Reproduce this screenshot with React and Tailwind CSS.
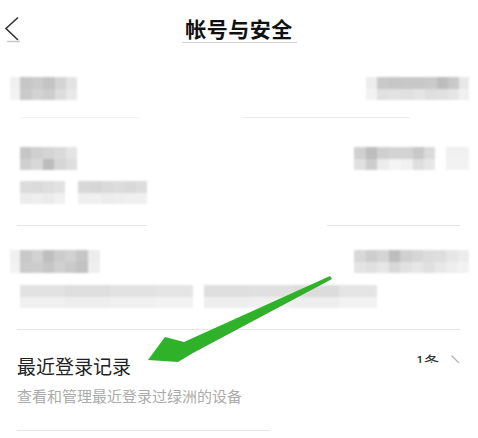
import React from "react";

const Mosaic = ({ rows, className = "" }) => (
  <div className={"flex flex-col blur-[1.2px] " + className}>
    {rows.map((r, i) => (
      <div key={i} className="flex h-[11.5px]">
        {r.map(([w, c], j) => (
          <div key={j} style={{ width: w, background: c }} />
        ))}
      </div>
    ))}
  </div>
);

export default function App() {
  return (
    <div
      className="relative w-[478px] h-[438px] overflow-hidden bg-white"
      style={{ fontFamily: '"Noto Sans CJK SC", "Noto Sans", sans-serif' }}
    >
      {/* header */}
      <div className="h-[60px] grid grid-cols-[1fr_auto_1fr] items-start">
        <div className="pt-[16px] pl-[4px]">
          <svg width="20" height="28" viewBox="0 0 20 28">
            <polyline points="14,1.5 2,12.5 14,24" fill="none" stroke="#333" strokeWidth="1.6" strokeLinejoin="miter" />
            <line x1="3" y1="25.5" x2="16" y2="25.5" stroke="#c8c8c8" strokeWidth="1.5" />
          </svg>
        </div>
        <div className="pt-[13px] flex flex-col items-center">
          <div className="text-[21px] leading-[30px] font-bold text-[#111] tracking-[0.5px]">帐号与安全</div>
          <div className="w-[115px] h-px bg-[#d4d4d4] mt-[-1px]" />
        </div>
        <div />
      </div>

      {/* row 1 */}
      <div className="mt-[17px] flex justify-between pl-[10px] pr-[9px]">
        <Mosaic
          rows={[
            [[10, "#f0f0f0"], [12, "#c6c6c6"], [11, "#cbcbcb"], [12, "#c3c3c3"], [11, "#d4d4d4"], [11, "#e3e3e3"]],
            [[10, "#f2f2f2"], [12, "#cacaca"], [11, "#d3d3d3"], [12, "#cdcdcd"], [11, "#dcdcdc"], [11, "#e8e8e8"]],
          ]}
        />
        <Mosaic
          rows={[
            [[11, "#ededed"], [12, "#c9c9c9"], [12, "#c6c6c6"], [12, "#c8c8c8"], [12, "#c8c8c8"], [12, "#cacaca"], [11, "#bdbdbd"], [11, "#c9c9c9"], [10, "#e8e8e8"]],
            [[11, "#f2f2f2"], [12, "#e0e0e0"], [12, "#e2e2e2"], [12, "#e0e0e0"], [12, "#e4e4e4"], [12, "#dedede"], [11, "#e0e0e0"], [11, "#e6e6e6"], [10, "#f0f0f0"]],
          ]}
        />
      </div>
      <div className="mt-[17px] flex">
        <div className="ml-[20px] w-[120px] h-px bg-[#f2f2f2]" />
        <div className="ml-[103px] w-[167px] h-px bg-[#ebebeb]" />
      </div>

      {/* row 2 */}
      <div className="mt-[29px] flex justify-between pl-[20px] pr-[9px]">
        <Mosaic
          rows={[
            [[11, "#c6c6c6"], [12, "#d0d0d0"], [11, "#d5d5d5"], [12, "#dadada"], [11, "#e4e4e4"]],
            [[11, "#cfcfcf"], [12, "#d8d8d8"], [11, "#bcbcbc"], [12, "#d6d6d6"], [11, "#dedede"]],
          ]}
        />
        <div className="flex gap-[11px]">
          <Mosaic
            rows={[
              [[12, "#d0d0d0"], [11, "#bdbdbd"], [12, "#cfcfcf"], [12, "#d3d3d3"], [12, "#d3d3d3"], [11, "#c8c8c8"], [11, "#dadada"]],
              [[12, "#e0e0e0"], [11, "#cdcdcd"], [12, "#ececec"], [12, "#f4f4f4"], [12, "#f0f0f0"], [11, "#dedede"], [11, "#e6e6e6"]],
            ]}
          />
          <Mosaic
            rows={[
              [[23, "#f0f0f0"]],
              [[23, "#f2f2f2"]],
            ]}
          />
        </div>
      </div>
      <div className="mt-[11px] flex gap-[13px] pl-[20px]">
        <Mosaic
          rows={[
            [[12, "#dcdcdc"], [11, "#dadada"], [11, "#dedede"], [11, "#e2e2e2"]],
            [[12, "#ececec"], [11, "#eeeeee"], [11, "#ebebeb"], [11, "#f0f0f0"]],
          ]}
        />
        <Mosaic
          rows={[
            [[12, "#d8d8d8"], [12, "#d6d6d6"], [12, "#dadada"], [11, "#dcdcdc"], [11, "#d9d9d9"], [11, "#dddddd"]],
            [[12, "#efefef"], [12, "#f0f0f0"], [12, "#ececec"], [11, "#eeeeee"], [11, "#f0f0f0"], [11, "#f0f0f0"]],
          ]}
        />
      </div>
      <div className="mt-[21px] flex">
        <div className="ml-[17px] w-[130px] h-px bg-[#e6e6e6]" />
        <div className="ml-[180px] w-[133px] h-px bg-[#e4e4e4]" />
      </div>

      {/* row 3 */}
      <div className="mt-[24px] flex justify-between pl-[10px] pr-[9px]">
        <Mosaic
          rows={[
            [[10, "#f0f0f0"], [12, "#c8c8c8"], [11, "#d2d2d2"], [11, "#bfbfbf"], [11, "#cccccc"], [11, "#d2d2d2"], [12, "#c6c6c6"], [12, "#ececec"]],
            [[10, "#f2f2f2"], [12, "#cbcbcb"], [11, "#cdcdcd"], [11, "#c6c6c6"], [11, "#d0d0d0"], [11, "#cacaca"], [12, "#c2c2c2"], [12, "#efefef"]],
          ]}
        />
        <Mosaic
          rows={[
            [[12, "#d8d8d8"], [11, "#cdcdcd"], [12, "#d5d5d5"], [11, "#bdbdbd"], [12, "#d0d0d0"], [11, "#d6d6d6"], [12, "#dcdcdc"], [11, "#dedede"], [12, "#e6e6e6"], [11, "#ececec"]],
            [[12, "#e4e4e4"], [11, "#e0e0e0"], [12, "#e6e6e6"], [11, "#d8d8d8"], [12, "#e2e2e2"], [11, "#e6e6e6"], [12, "#e0e0e0"], [11, "#e8e8e8"], [12, "#eeeeee"], [11, "#f2f2f2"]],
          ]}
        />
      </div>
      <div className="mt-[12px] flex gap-[11px] pl-[20px]">
        <Mosaic
          rows={[
            [[45, "#e2e2e2"], [45, "#dedede"], [45, "#e2e2e2"], [38, "#e4e4e4"]],
            [[45, "#f0f0f0"], [45, "#eeeeee"], [45, "#f0f0f0"], [38, "#f2f2f2"]],
          ]}
        />
        <Mosaic
          rows={[
            [[45, "#dedede"], [45, "#e0e0e0"], [45, "#dcdcdc"], [38, "#e4e4e4"]],
            [[45, "#eeeeee"], [45, "#f0f0f0"], [45, "#eeeeee"], [38, "#f2f2f2"]],
          ]}
        />
      </div>
      <div className="mt-[21px] ml-[17px] w-[443px] h-px bg-[#e6e6e6]" />

      {/* row 4 */}
      <div className="flex justify-between items-start pl-[17px] pr-[18px]">
        <div className="flex flex-col">
          <div className="mt-[23px] text-[19px] leading-[26px] text-[#222]">最近登录记录</div>
          <div className="mt-[7px] text-[15px] leading-[20px] text-[#ababab]">查看和管理最近登录过绿洲的设备</div>
        </div>
        <div className="mt-[24px] h-[9px] overflow-hidden flex items-start gap-[12px]">
          <span className="text-[15px] leading-[16px] text-[#333] mt-[-1px]">1条</span>
          <svg width="9" height="16" viewBox="0 0 9 16" className="mt-[1px]">
            <polyline points="0.5,0.5 8,8 0.5,15.5" fill="none" stroke="#b0b0b0" strokeWidth="1.2" />
          </svg>
        </div>
      </div>
      <div className="mt-[24px] ml-[17px] w-[253px] h-px bg-[#e6e6e6]" />

      {/* green arrow annotation */}
      <svg className="absolute left-0 top-0 pointer-events-none" width="478" height="438" viewBox="0 0 478 438">
        <polygon
          points="330,276 332,279 193,353 178,362 148,360 165,337 184,342"
          fill="#2fb22a"
        />
      </svg>
    </div>
  );
}
